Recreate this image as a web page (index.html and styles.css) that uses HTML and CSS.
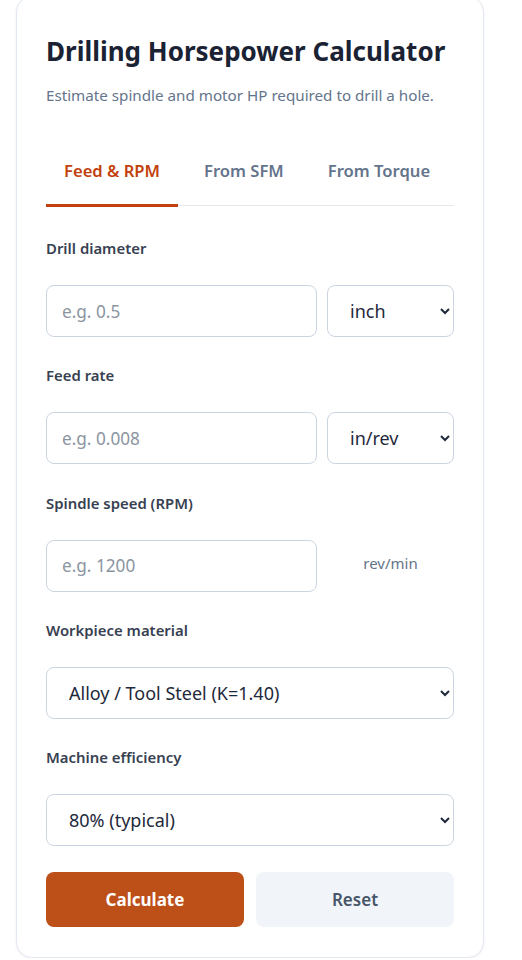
FILE: index.html
```html
<!DOCTYPE html>
<html lang="en">
<head>
    <meta charset="UTF-8">
    <meta name="viewport" content="width=device-width, initial-scale=1.0">
    <title>Drilling Horsepower Calculator</title>
    <link rel="stylesheet" href="styles.css">
</head>
<body>
    <div class="calc-card">
        <h1>Drilling Horsepower Calculator</h1>
        <p class="subtitle">Estimate spindle and motor HP required to drill a hole.</p>

        <div class="tabs">
            <button class="tab active">Feed &amp; RPM</button>
            <button class="tab">From SFM</button>
            <button class="tab">From Torque</button>
        </div>

        <div class="field">
            <label for="diameter">Drill diameter</label>
            <div class="row">
                <input id="diameter" type="text" placeholder="e.g. 0.5">
                <select>
                    <option>inch</option>
                    <option>mm</option>
                </select>
            </div>
        </div>

        <div class="field">
            <label for="feed">Feed rate</label>
            <div class="row">
                <input id="feed" type="text" placeholder="e.g. 0.008">
                <select>
                    <option>in/rev</option>
                    <option>mm/rev</option>
                </select>
            </div>
        </div>

        <div class="field">
            <label for="rpm">Spindle speed (RPM)</label>
            <div class="row">
                <input id="rpm" type="text" placeholder="e.g. 1200">
                <span class="unit">rev/min</span>
            </div>
        </div>

        <div class="field">
            <label for="material">Workpiece material</label>
            <select id="material" class="full">
                <option>Alloy / Tool Steel (K=1.40)</option>
                <option>Mild Steel (K=1.00)</option>
                <option>Aluminum (K=0.30)</option>
            </select>
        </div>

        <div class="field">
            <label for="eff">Machine efficiency</label>
            <select id="eff" class="full">
                <option>80% (typical)</option>
                <option>70%</option>
                <option>90%</option>
            </select>
        </div>

        <div class="actions">
            <button class="btn primary">Calculate</button>
            <button class="btn secondary">Reset</button>
        </div>
    </div>
</body>
</html>
```

FILE: styles.css
```css
body {
    margin: 0;
    padding: 0 38px 0 16px;
    background: #fff;
    font-family: "Noto Sans", "Open Sans", sans-serif;
    color: #1e293b;
}
.calc-card {
    margin-top: -4px;
    background: #fff;
    border: 1px solid #e2e8f0;
    border-radius: 16px;
    box-shadow: 0 1px 3px rgba(15, 23, 42, 0.06);
    padding: 37px 29px 30px;
}
h1 {
    margin: 0;
    font-size: 26px;
    line-height: 34px;
    font-weight: 700;
    color: #1a2233;
}
.subtitle {
    margin: 17px 0 0;
    font-size: 15.2px;
    line-height: 20px;
    color: #64748b;
}
.tabs {
    display: flex;
    gap: 8px;
    margin-top: 42px;
    border-bottom: 1px solid #e5e7eb;
}
.tab {
    background: none;
    border: none;
    border-bottom: 3px solid transparent;
    margin-bottom: -2px;
    padding: 12px 18px 22px;
    font-family: inherit;
    font-size: 16.6px;
    font-weight: 600;
    color: #64748b;
    cursor: pointer;
}
.tab.active {
    color: #c2410c;
    border-bottom-color: #c2410c;
}
.field {
    margin-top: 32px;
}
.field + .field {
    margin-top: 28.3px;
}
label {
    display: block;
    font-size: 14.9px;
    line-height: 20px;
    font-weight: 600;
    color: #374151;
    margin-bottom: 27px;
}
.row {
    display: grid;
    grid-template-columns: 1fr 127px;
    gap: 10px;
    align-items: center;
}
input,
select {
    box-sizing: border-box;
    height: 52px;
    width: 100%;
    border: 1px solid #cbd5e1;
    border-radius: 8px;
    background: #fff;
    font-family: inherit;
    font-size: 18px;
    color: #1e293b;
}
input {
    padding: 0 15px;
    font-size: 17.2px;
}
input::placeholder {
    color: #8b95a1;
}
select {
    padding: 0 8px 0 18px;
}
.unit {
    text-align: center;
    font-size: 15px;
    color: #64748b;
    margin-top: -6px;
}
.actions {
    display: grid;
    grid-template-columns: 1fr 1fr;
    gap: 12px;
    margin-top: 26px;
}
.btn {
    height: 55px;
    border: none;
    border-radius: 8px;
    font-family: inherit;
    font-size: 17px;
    font-weight: 700;
    cursor: pointer;
}
.primary {
    background: #bd4f19;
    color: #fff;
}
.secondary {
    background: #f1f5f9;
    color: #475569;
    font-weight: 600;
}
```
